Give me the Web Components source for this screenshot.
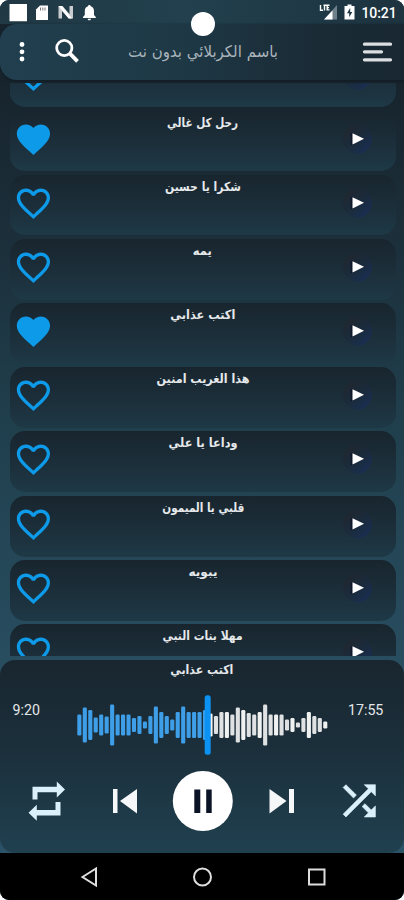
<!DOCTYPE html>
<html lang="ar"><head><meta charset="utf-8"><title>Player</title>
<style>
html,body{margin:0;height:100%;background:#fff;overflow:hidden}
</style></head><body>
<player-app></player-app>
<script>
const def=(name,css,html,after)=>customElements.define(name,class extends HTMLElement{
  connectedCallback(){
    if(this.shadowRoot)return;
    const r=this.attachShadow({mode:'open'});
    r.innerHTML=`<style>*{box-sizing:border-box}svg{display:block}${css}</style>`+(typeof html==='function'?html(this):html);
    if(after)after(this,r);
  }
});

/* One line of Arabic text, condensed or widened to a given width */
def('fit-text',`:host{display:flex;justify-content:center;white-space:nowrap;direction:rtl}span{display:block;transform-origin:50% 50%}`,
 '<span><slot></slot></span>',(el,r)=>{
  const s=r.querySelector('span'),w=s.getBoundingClientRect().width,t=+el.getAttribute('width');
  if(w&&t)s.style.transform=`scaleX(${t/w})`;
});

def('status-bar',`:host{display:flex;justify-content:space-between;height:24px;color:#fff;background:linear-gradient(90deg,#203844,#22404e 45%,#1d333f)}
 svg{flex:none}.r{display:flex;align-items:center;padding-right:7.500px}.r svg{margin-right:6px}
 b{font:500 14px/24px Roboto,sans-serif;letter-spacing:-.1px;padding-top:2px}`,
 `<svg width="110" height="24" viewBox="0 0 110 24"><path fill="#fff" d="M9.500 4H27v17.300H9.500z"/>
  <path fill="#fff" d="M40 5.500h8V20H36V9.500z"/><path stroke="#777" d="M40.500 7.500v3M42.800 7.500v3M45 7.500v3" stroke-width="1"/>
  <path fill="#c9cdd0" d="M58.500 6h4l7 8V6H73v12.500h-3.500L62 11v7.500h-3.500z"/><path fill="#fff" d="M58.500 6h3.500L72 18.500h-3.500z"/>
  <path fill="#fff" d="M89.300 5c1 0 1.400.6 1.400 1.300 2.400.6 3.300 2.600 3.300 5v3.800l1.800 2v.8H83v-.8l1.800-2v-3.800c0-2.400.9-4.400 3.200-5 0-.7.400-1.300 1.300-1.300zM87.700 18.800h3.300c0 2-3.300 2-3.300 0z"/></svg>
  <div class="r"><svg width="19" height="24" viewBox="0 0 19 24"><path fill="#70808a" d="M18 5v14.500H5z"/><path fill="#fff" d="M13.500 10.500v9H5z"/><path d="M1.500 5v5.200H4M5.500 4.500v6M4.500 5.200h3M7.500 7.600h2.500M8.200 10.500V5.200h2.300M8.500 9.900h2" stroke="#fff" stroke-width="1.400" fill="none"/></svg>
  <svg width="11" height="24" viewBox="0 0 11 24"><path fill="#fff" d="M3.500 4.500h4V6H10.500v13.500H.500V6h3z"/><path fill="#203743" d="M6.200 8 3 13.300h2.200v4L8.300 12H6.200z"/></svg><b>10:21</b></div>`);

def('app-header',`:host{display:flex;align-items:center;height:55.500px;position:relative;z-index:1;border-radius:17px 0 0 17px;background:linear-gradient(90deg,#213f4f,#1e3845 45%,#1a2b36 78%,#192832);box-shadow:0 1px 3px #101b22}
 fit-text{position:relative;flex:1;font:16px/28px "DejaVu Sans",sans-serif;color:#a9b4bb}svg{flex:none}`,
 `<svg width="100" height="55" viewBox="0 0 100 55"><g fill="#fff"><circle cx="22" cy="20.500" r="2.400"/><circle cx="22" cy="27.800" r="2.400"/><circle cx="22" cy="35" r="2.400"/></g><g fill="none" stroke="#fff"><circle cx="64.300" cy="24" r="7.600" stroke-width="2.800"/><path stroke-width="3.800" d="m69.500 29.200 8 8.200"/></g></svg>
 <fit-text width="150">باسم الكربلائي بدون نت</fit-text>
 <svg width="98" height="55" viewBox="0 0 98 55"><path stroke="#dcdfe1" stroke-width="3.300" stroke-linecap="round" d="M58.500 20.200h26M58.500 27.800h17M58.500 35.800h26"/></svg>`);

/* A song: heart, title, play button */
def('song-row',`:host{display:grid;grid-template-columns:80px 1fr 80px;height:61px;margin:0 8px 3.090px 9.500px;border-radius:15px;background:linear-gradient(#18252e,#1b2d38 45%,#1e3946)}
 :host([short]){height:59.500px;margin-bottom:4.590px}
 fit-text{font:bold 12.500px/22px "DejaVu Sans",sans-serif;color:#e6e9eb;padding-top:1px}`,
 el=>`<svg width="80" height="61" viewBox="0 0 80 61"><path transform="translate(3.500 8.600) scale(1.660)" fill="#0d9be9" d="${el.hasAttribute('liked')
 ?'M12 21.350l-1.450-1.320C5.400 15.360 2 12.280 2 8.500 2 5.420 4.420 3 7.500 3c1.740 0 3.410.81 4.500 2.090C13.090 3.810 14.760 3 16.500 3 19.580 3 22 5.420 22 8.500c0 3.780-3.400 6.860-8.550 11.540L12 21.350z'
 :'M16.500 3c-1.740 0-3.410.81-4.500 2.090C10.910 3.810 9.240 3 7.500 3 4.420 3 2 5.420 2 8.500c0 3.780 3.400 6.860 8.550 11.540L12 21.350l1.450-1.320C18.600 15.360 22 12.280 22 8.500 22 5.420 19.580 3 16.500 3zm-4.400 15.550l-.1.100-.1-.1C7.140 14.240 4 11.390 4 8.500 4 6.500 5.500 5 7.500 5c1.540 0 3.040.99 3.570 2.360h1.870C13.460 5.990 14.960 5 16.500 5c2 0 3.500 1.500 3.500 3.500 0 2.890-3.140 5.740-7.900 10.050z'}"/></svg>
 ${el.textContent?`<fit-text width="${el.getAttribute('width')}"><slot></slot></fit-text>`:'<div></div>'}
 <svg width="80" height="61" viewBox="0 0 80 61"><defs><linearGradient id="g" x1="0" y1="0" x2="1" y2="1"><stop offset=".1" stop-color="#21252d"/><stop offset=".5" stop-color="#1b2a3c"/><stop offset=".9" stop-color="#172d5c"/></linearGradient></defs><circle cx="41.500" cy="28" r="14.500" fill="url(#g)" opacity=".7"/><path fill="#10182d" d="M34.500 22h3v12h-3z"/><path fill="#fff" d="M36.500 22.200 48 27.800 36.500 33.500z"/></svg>`);

def('song-list',`:host{display:block;height:576.500px;overflow:hidden;padding-top:3.500px}.v{height:573px;overflow:hidden}.s{margin-top:-36px}`,
 '<div class="v"><div class="s"><slot></slot></div></div>');

def('wave-form',':host{display:block}','',(el,r)=>{
 const h=[21,35,30,15,21,17,41,21,21,21,14,18,7,18,37,26,18,11,26,37,26,26,26,30,23,18,26,26,21,35,30,24,21,26,41,21,21,21,11,14,5,14,26,18,14,7];
 r.innerHTML+=`<svg width="260" height="62" viewBox="0 0 260 62">${h.map((v,i)=>`<rect x="${5.300+i*5.465}" y="${31-v/2}" width="4.100" height="${v}" rx="1.300" fill="${i<24?'#3e9fe8':i%3?'#dfe1e2':'#f0f1f1'}"/>`).join('')}<rect x="132.700" y="1.300" width="6" height="59.400" rx="2.500" fill="#0c92f2"/></svg>`;
});

def('player-panel',`:host{display:flex;flex-direction:column;height:193px;margin-top:4px;border-radius:15px;background:linear-gradient(#19262f,#1b2f3b 45%,#20404f)}
 fit-text{font:bold 12.500px/20px "DejaVu Sans",sans-serif;color:#e6e9eb;margin:-.5px 0 .5px}
 .t{display:flex;padding:13px 0 0 12.500px;font:14.200px/17px Roboto,sans-serif;color:#e4e7e9;height:83px}
 .t span{padding-top:8.500px;width:30px;white-space:nowrap}.t wave-form{margin:.5px 16px 0 29.500px}`,
 `<fit-text width="63"><slot></slot></fit-text>
 <div class="t"><span>9:20</span><wave-form></wave-form><span>17:55</span></div>
 <svg width="404" height="90" viewBox="0 763 404 90">
 <g fill="#daf0fa"><path d="M32.500 799.500v-12.800h24.300v-5.200l8.200 8-8.200 8v-5.300H37.500v7.300zM60.500 802v13.500H36.800v5.300l-8.300-8 8.300-8v5.200h18.700v-8z"/>
 <path transform="translate(335 776.600) scale(2.020)" stroke="#daf0fa" stroke-width=".3" d="M10.590 9.170L5.410 4 4 5.410l5.170 5.170 1.420-1.410zM14.500 4l2.040 2.040L4 18.590 5.410 20 17.960 7.460 20 9.500V4h-5.500zm.33 9.410l-1.410 1.410 3.130 3.130L14.500 20H20v-5.500l-2.040 2.040-3.130-3.130z"/></g>
 <g fill="#f5f7f8"><path d="M113 789h4.500v24H113zM137 789v24.500L120 801zM269.500 789l17 12-17 12.500zM289 789h5v24h-5z"/></g>
 <circle cx="202.800" cy="801" r="30" fill="#fff"/><path fill="#0b1426" d="M194.300 789.500h6v23.500h-6zM206.200 789.500h5.500v23.500h-5.500z"/></svg>`);

def('nav-bar',':host{display:block;height:47px;background:#000}',
 `<svg width="404" height="47" viewBox="0 853 404 47"><g fill="none" stroke="#dedede" stroke-width="2"><path d="m82.500 877 13.500-8.500v17z"/><circle cx="202.500" cy="877" r="8.500"/><path d="M309 869.500h15.500v15H309z"/></g></svg>`);

def('player-app',`:host{display:flex;flex-direction:column;position:relative;width:404px;height:900px;overflow:hidden;border-radius:9px;background:linear-gradient(#17242d 9%,#1c303c 28%,#203f4d 47%,#284d5f 73%,#2b5266 95%)}
 i{position:absolute;z-index:2;left:191px;top:12px;width:24px;height:24px;border-radius:50%;background:#fff}status-bar,app-header,song-list,player-panel,nav-bar{flex:none}nav-bar{margin-top:auto}`,
 `<status-bar></status-bar><app-header></app-header><song-list>
 <song-row short></song-row>
 <song-row short liked width="71">رحل كل غالي</song-row>
 <song-row short width="76">شكرا يا حسين</song-row>
 <song-row width="19">يمه</song-row>
 <song-row liked width="65">اكتب عذابي</song-row>
 <song-row width="93">هذا الغريب امنين</song-row>
 <song-row width="69">وداعا يا علي</song-row>
 <song-row width="82">قلبي يا الميمون</song-row>
 <song-row width="29">يبويه</song-row>
 <song-row width="80">مهلا بنات النبي</song-row>
 </song-list><player-panel>اكتب عذابي</player-panel><nav-bar></nav-bar><i></i>`);
</script></body></html>
